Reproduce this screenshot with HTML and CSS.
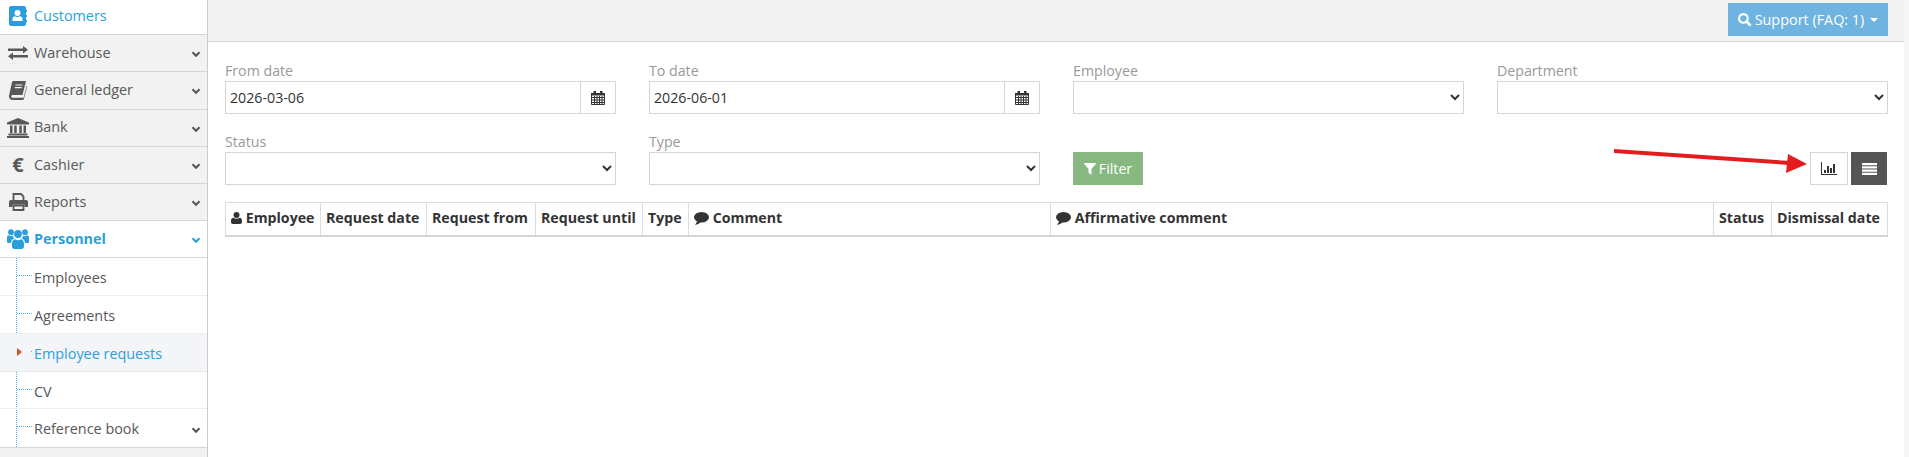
FILE: index.html
```html
<!DOCTYPE html>
<html lang="en">

<head>
    <meta charset="UTF-8">
    <meta name="viewport" content="width=device-width, initial-scale=1.0">
    <title>Employee requests</title>
    <link rel="stylesheet" href="styles.css">
</head>

<body>
    <!-- icon sprite -->
    <svg class="sprite" xmlns="http://www.w3.org/2000/svg">
        <symbol id="i-contact" viewBox="0 0 18 20">
            <path d="M2 0H15a2 2 0 0 1 2 2V4H18V6H17V9H18V11H17V14H18V16H17V18a2 2 0 0 1-2 2H2a2 2 0 0 1-2-2V2a2 2 0 0 1 2-2Z"/>
            <circle cx="8.5" cy="7" r="3" fill="#fff"/>
            <path d="M3.5 15V13C3.5 11 5 10.3 6 10.3 7.5 11.3 9.5 11.3 11 10.3 12 10.3 13.5 11 13.5 13V15Z" fill="#fff"/>
        </symbol>
        <symbol id="i-exchange" viewBox="0 0 20 14">
            <path d="M0 2.5H15V0L20 3.8 15 7.6V5H0Z"/>
            <path d="M20 9H5V6.4L0 10.2 5 14V11.5H20Z"/>
        </symbol>
        <symbol id="i-book" viewBox="0 0 18 19">
            <path d="M4.2 0H17L13.5 14H3.7C1.8 14 1.8 16.8 3.7 16.8H14.6L17.8 4.5 18 6 15 17.4C14.8 18.4 14 19 13 19H3.5C.8 19-.6 16.5.2 13.8L3 1.2C3.2.5 3.6 0 4.2 0Z"/>
            <path d="M6.4 4H13.4M5.8 6.6H12.8" stroke="#f2f2f2" stroke-width="1.2"/>
        </symbol>
        <symbol id="i-bank" viewBox="0 0 22 20">
            <path d="M11 0 22 4.6V6.4H0V4.6Z"/>
            <path d="M3 7.5H5.5V15H3ZM7.2 7.5H9.7V15H7.2ZM12.3 7.5H14.8V15H12.3ZM16.5 7.5H19V15H16.5Z"/>
            <path d="M1.5 15.6H20.5V17.4H1.5ZM0 18H22V20H0Z"/>
        </symbol>
        <symbol id="i-print" viewBox="0 0 19 18">
            <path d="M4.5 8V1H12L14.5 3.5V8" fill="none" stroke="#585858" stroke-width="1.8"/>
            <path d="M2 7H17a2 2 0 0 1 2 2V14H15.5V11.5H3.5V14H0V9a2 2 0 0 1 2-2Z"/>
            <path d="M4.5 12.5H14.5V17H4.5Z" fill="none" stroke="#585858" stroke-width="1.8"/>
        </symbol>
        <symbol id="i-users" viewBox="0 0 22 20">
            <circle cx="4" cy="3.2" r="2.9"/>
            <circle cx="18" cy="3.2" r="2.9"/>
            <circle cx="11" cy="5" r="3.9"/>
            <path d="M0 13V8.5C0 7 1 6.3 2 6.3 3 7 4.3 7.2 5.6 6.6 6 8 6.600 9 7.400 9.500 5.500 10 4 11.500 4 14H1.500C.5 14 0 13.800 0 13ZM22 13V8.500C22 7 21 6.300 20 6.300 19 7 17.700 7.200 16.400 6.600 16 8 15.400 9 14.600 9.500 16.500 10 18 11.500 18 14H20.500C21.500 14 22 13.800 22 13Z"/>
            <path d="M5 17.500V14.500C5 11.800 6.800 10.200 8.200 10.200 10 11.500 12 11.500 13.800 10.200 15.200 10.200 17 11.800 17 14.500V17.500C17 19 16 20 14.500 20H7.500C6 20 5 19 5 17.500Z"/>
        </symbol>
        <symbol id="i-calendar" viewBox="0 0 14 14">
            <path d="M.5 3H13.500V13.500H.5ZM.5 6.500H13.500M.5 9H13.500M.5 11.500H13.500M3.500 5V13.500M6 5V13.500M8.500 5V13.500M11 5V13.500" fill="none" stroke="#333" stroke-width="1"/>
            <path d="M0 2H14V4.500H0ZM2.500 0H5V3H2.500ZM9 0H11.500V3H9Z" fill="#333"/>
        </symbol>
        <symbol id="i-user" viewBox="0 0 11 12">
            <circle cx="5.500" cy="3" r="3"/>
            <path d="M0 10V8.500C0 6.800 1.200 5.800 2.500 5.800 4.200 7 6.800 7 8.500 5.800 9.800 5.800 11 6.800 11 8.500V10C11 11.300 10.300 12 9 12H2C.7 12 0 11.300 0 10Z"/>
        </symbol>
        <symbol id="i-comment" viewBox="0 0 15 13">
            <ellipse cx="7.500" cy="5.300" rx="7.500" ry="5.300"/>
            <path d="M3.500 9 1 13C3 12.600 5.500 11.500 7 10Z"/>
        </symbol>
        <symbol id="i-filter" viewBox="0 0 12 12">
            <path d="M0 0H12V.8L7.500 6V12L4.500 9.800V6L0 .8Z"/>
        </symbol>
        <symbol id="i-search" viewBox="0 0 13 13">
            <circle cx="5.400" cy="5.400" r="4.300" fill="none" stroke="#fff" stroke-width="2.100"/>
            <path d="M8.500 8.500 12 12" stroke="#fff" stroke-width="2.600" stroke-linecap="round"/>
        </symbol>
        <symbol id="i-chart" viewBox="0 0 16 13">
            <path d="M0 0H1V12H16V13H0ZM3 8H5V11H3ZM6 4H8V11H6ZM9 6H11V11H9ZM12 2H14V11H12Z"/>
        </symbol>
        <symbol id="i-list" viewBox="0 0 15 12">
            <path d="M0 0H15V2.300H0ZM0 3.200H15V5.500H0ZM0 6.500H15V8.800H0ZM0 9.700H15V12H0Z"/>
        </symbol>
        <symbol id="i-chevron" viewBox="0 0 10 7">
            <path d="M1.500 1.200 5 4.800 8.500 1.200" fill="none" stroke-width="2"/>
        </symbol>
    </svg>

    <div class="layout">
        <nav class="sidebar">
            <ul class="menu">
                <li class="menu-item first">
                    <span class="menu-icon blue"><svg class="ic-contact"><use href="#i-contact"/></svg></span>
                    <span class="menu-label active-link">Customers</span>
                </li>
                <li class="menu-item">
                    <span class="menu-icon"><svg class="ic-exchange"><use href="#i-exchange"/></svg></span>
                    <span class="menu-label">Warehouse</span>
                    <svg class="chevron"><use href="#i-chevron"/></svg>
                </li>
                <li class="menu-item">
                    <span class="menu-icon"><svg class="ic-book"><use href="#i-book"/></svg></span>
                    <span class="menu-label">General ledger</span>
                    <svg class="chevron"><use href="#i-chevron"/></svg>
                </li>
                <li class="menu-item">
                    <span class="menu-icon"><svg class="ic-bank"><use href="#i-bank"/></svg></span>
                    <span class="menu-label">Bank</span>
                    <svg class="chevron"><use href="#i-chevron"/></svg>
                </li>
                <li class="menu-item">
                    <span class="menu-icon euro">€</span>
                    <span class="menu-label">Cashier</span>
                    <svg class="chevron"><use href="#i-chevron"/></svg>
                </li>
                <li class="menu-item">
                    <span class="menu-icon"><svg class="ic-print"><use href="#i-print"/></svg></span>
                    <span class="menu-label">Reports</span>
                    <svg class="chevron"><use href="#i-chevron"/></svg>
                </li>
                <li class="menu-item open">
                    <span class="menu-icon blue"><svg class="ic-users"><use href="#i-users"/></svg></span>
                    <span class="menu-label active-link strong">Personnel</span>
                    <svg class="chevron blue"><use href="#i-chevron"/></svg>
                </li>
            </ul>
            <ul class="submenu">
                <li class="sub-item">Employees</li>
                <li class="sub-item">Agreements</li>
                <li class="sub-item current"><span class="active-link">Employee requests</span></li>
                <li class="sub-item">CV</li>
                <li class="sub-item last">Reference book <svg class="chevron"><use href="#i-chevron"/></svg></li>
            </ul>
        </nav>

        <div class="main">
            <header class="topbar">
                <button class="support-btn">
                    <svg class="ic-search"><use href="#i-search"/></svg>
                    Support (FAQ: 1)
                    <span class="caret"></span>
                </button>
            </header>

            <div class="content">
                <form class="filters">
                    <div class="field">
                        <label>From date</label>
                        <div class="input-group">
                            <input type="text" value="2026-03-06">
                            <span class="addon"><svg class="ic-calendar"><use href="#i-calendar"/></svg></span>
                        </div>
                    </div>
                    <div class="field">
                        <label>To date</label>
                        <div class="input-group">
                            <input type="text" value="2026-06-01">
                            <span class="addon"><svg class="ic-calendar"><use href="#i-calendar"/></svg></span>
                        </div>
                    </div>
                    <div class="field">
                        <label>Employee</label>
                        <select><option></option></select>
                    </div>
                    <div class="field">
                        <label>Department</label>
                        <select><option></option></select>
                    </div>
                    <div class="field">
                        <label>Status</label>
                        <select><option></option></select>
                    </div>
                    <div class="field">
                        <label>Type</label>
                        <select><option></option></select>
                    </div>
                    <div class="field end">
                        <button type="button" class="filter-btn">
                            <svg class="ic-filter"><use href="#i-filter"/></svg> Filter
                        </button>
                    </div>
                    <div class="field end view-switch">
                        <button type="button" class="view-btn"><svg class="ic-chart"><use href="#i-chart"/></svg></button>
                        <button type="button" class="view-btn selected"><svg class="ic-list"><use href="#i-list"/></svg></button>
                    </div>
                </form>

                <table class="requests">
                    <thead>
                        <tr>
                            <th class="col-employee"><svg class="ic-user"><use href="#i-user"/></svg> Employee</th>
                            <th class="col-date">Request date</th>
                            <th class="col-from">Request from</th>
                            <th class="col-until">Request until</th>
                            <th class="col-type">Type</th>
                            <th class="col-comment"><svg class="ic-comment"><use href="#i-comment"/></svg> Comment</th>
                            <th><svg class="ic-comment"><use href="#i-comment"/></svg> Affirmative comment</th>
                            <th class="col-status">Status</th>
                            <th class="col-dismissal">Dismissal date</th>
                        </tr>
                    </thead>
                </table>
            </div>
        </div>
    </div>

    <!-- red annotation arrow drawn on top of the screenshot -->
    <svg class="arrow" viewBox="0 0 200 30">
        <path d="M2 1 178 13 178 17 2 5Z"/>
        <path d="M176 6 195 16 174 25Z"/>
    </svg>
</body>

</html>
```

FILE: styles.css
```css
* {
    margin: 0;
    padding: 0;
    box-sizing: border-box;
}

body {
    height: 100vh;
    overflow: hidden;
    background: #f7f7f7;
    font-family: "Open Sans", sans-serif;
    font-size: 14.2px;
    color: #333;
}

.sprite {
    position: absolute;
    width: 0;
    height: 0;
}

.layout {
    display: flex;
    height: 100%;
}

/* sidebar */
.sidebar {
    width: 208px;
    background: #f2f2f2;
    border-right: 1px solid #ccc;
    flex-shrink: 0;
    font-size: 14.4px;
}

.menu,
.submenu {
    list-style: none;
}

.menu-item {
    display: flex;
    align-items: center;
    height: 37.3px;
    padding-left: 6px;
    background: #f2f2f2;
    border-bottom: 1px solid #d5d5d5;
    color: #585858;
    fill: #585858;
    position: relative;
}

.menu-item.first {
    height: 35px;
    padding-bottom: 2px;
    background: #fff;
}

.menu-item.open {
    background: #fff;
    height: 37px;
}

.menu-label {
    margin-top: -2px;
}

.menu-icon {
    width: 28px;
    display: flex;
    justify-content: center;
    flex-shrink: 0;
    padding-right: 4px;
}

.menu-icon.blue {
    fill: #2b9fdc;
}

.menu-icon.euro {
    font-weight: 700;
    font-size: 20px;
    line-height: 20px;
}

.ic-contact { width: 18px; height: 20px; }
.ic-exchange { width: 20px; height: 14px; }
.ic-book { width: 18px; height: 19px; }
.ic-bank { width: 22px; height: 20px; }
.ic-print { width: 19px; height: 18px; }
.ic-users { width: 22px; height: 20px; }

.active-link {
    color: #2b9fdc;
}

.strong {
    font-weight: 700;
}

.chevron {
    position: absolute;
    right: 6px;
    top: 16px;
    width: 10px;
    height: 7px;
    stroke: #555;
}

.chevron.blue {
    stroke: #2b9fdc;
}

.submenu {
    background: #fff;
    border-bottom: 1px solid #d5d5d5;
    position: relative;
}

/* dotted tree line */
.submenu::before {
    content: "";
    position: absolute;
    left: 16px;
    top: 0;
    bottom: 0;
    border-left: 1px dotted #55aef0;
}

.sub-item {
    height: 37.7px;
    padding-left: 34px;
    line-height: 39px;
    color: #585858;
    border-bottom: 1px dotted #e0e0e0;
    position: relative;
}

.sub-item::before {
    content: "";
    position: absolute;
    left: 17px;
    top: 17px;
    width: 15px;
    border-top: 1px dotted #55aef0;
}

.sub-item.last {
    border-bottom: 0;
}

.sub-item .chevron {
    top: 18px;
}

.sub-item.current {
    background: #f4f5f9;
}

.sub-item.current::before {
    left: 31px;
    width: 1px;
}

/* small red triangle of the current page */
.sub-item.current::after {
    content: "";
    position: absolute;
    left: 17px;
    top: 14px;
    border-left: 5px solid #c8552f;
    border-top: 4px solid transparent;
    border-bottom: 4px solid transparent;
}

/* main part */
.main {
    flex: 1;
    margin-right: 5px;
    background: #fff;
}

.topbar {
    display: flex;
    justify-content: flex-end;
    height: 42px;
    padding: 3px 16px 0 0;
    background: #f2f2f2;
    border-bottom: 1px solid #d5d5d5;
}

.support-btn {
    display: flex;
    align-items: center;
    justify-content: center;
    gap: 4px;
    width: 160px;
    height: 33px;
    background: #6fb3e0;
    border: none;
    color: #fff;
    font-family: inherit;
    font-size: 14.4px;
}

.ic-search {
    width: 13px;
    height: 13px;
}

.caret {
    margin-left: 2px;
    border-top: 4px solid #fff;
    border-left: 4px solid transparent;
    border-right: 4px solid transparent;
}

.content {
    padding: 20px 16px 0 17px;
}

.filters {
    display: grid;
    grid-template-columns: repeat(4, 391px);
    column-gap: 33px;
    row-gap: 19px;
}

.field {
    display: flex;
    flex-direction: column;
}

.field.end {
    justify-content: flex-end;
}

.field label {
    height: 19px;
    line-height: 17px;
    color: #999;
}

.field input,
.field select {
    height: 33px;
    width: 100%;
    border: 1px solid #d5d5d5;
    background: #fff;
    font-family: inherit;
    font-size: 14.2px;
    color: #333;
    padding: 0 4px;
    border-radius: 0;
    outline: none;
}

.input-group {
    display: flex;
}

.input-group input {
    flex: 1;
    min-width: 0;
}

.addon {
    display: flex;
    align-items: center;
    justify-content: center;
    width: 36px;
    height: 33px;
    margin-left: -1px;
    border: 1px solid #d5d5d5;
}

.ic-calendar {
    width: 14px;
    height: 14px;
}

.filter-btn {
    display: flex;
    align-items: center;
    justify-content: center;
    gap: 3px;
    width: 70px;
    height: 33px;
    background: #87b87f;
    border: none;
    color: #fff;
    fill: #fff;
    font-family: inherit;
    font-size: 14.2px;
}

.ic-filter {
    width: 12px;
    height: 12px;
}

.view-switch {
    flex-direction: row;
    justify-content: flex-end;
    align-items: flex-end;
    gap: 3px;
    padding-right: 1px;
}

.view-btn {
    display: flex;
    align-items: center;
    justify-content: center;
    width: 38px;
    height: 33px;
    background: #fff;
    border: 1px solid #d5d5d5;
    fill: #333;
}

.view-btn.selected {
    width: 36px;
    background: #555;
    border-color: #555;
    fill: #fff;
}

.ic-chart { width: 16px; height: 13px; }
.ic-list { width: 15px; height: 12px; }

.requests {
    width: 1663px;
    margin-top: 17px;
    table-layout: fixed;
    border-collapse: collapse;
}

.requests th {
    height: 33px;
    padding: 0 5px 2px;
    border: 1px solid #ddd;
    border-bottom: 2px solid #d5d5d5;
    font-weight: 700;
    font-size: 14.2px;
    text-align: left;
    white-space: nowrap;
    fill: #333;
}

.col-employee { width: 95px; }
.col-date { width: 106px; }
.col-from { width: 109px; }
.col-until { width: 107px; }
.col-type { width: 46px; }
.col-comment { width: 362px; }
.col-status { width: 58px; }
.col-dismissal { width: 116px; }

.ic-user { width: 11px; height: 12px; vertical-align: -1px; }
.ic-comment { width: 15px; height: 13px; vertical-align: -2px; }

/* annotation */
.arrow {
    position: absolute;
    left: 1612px;
    top: 148px;
    width: 200px;
    height: 30px;
    fill: #e51c1f;
}
```
